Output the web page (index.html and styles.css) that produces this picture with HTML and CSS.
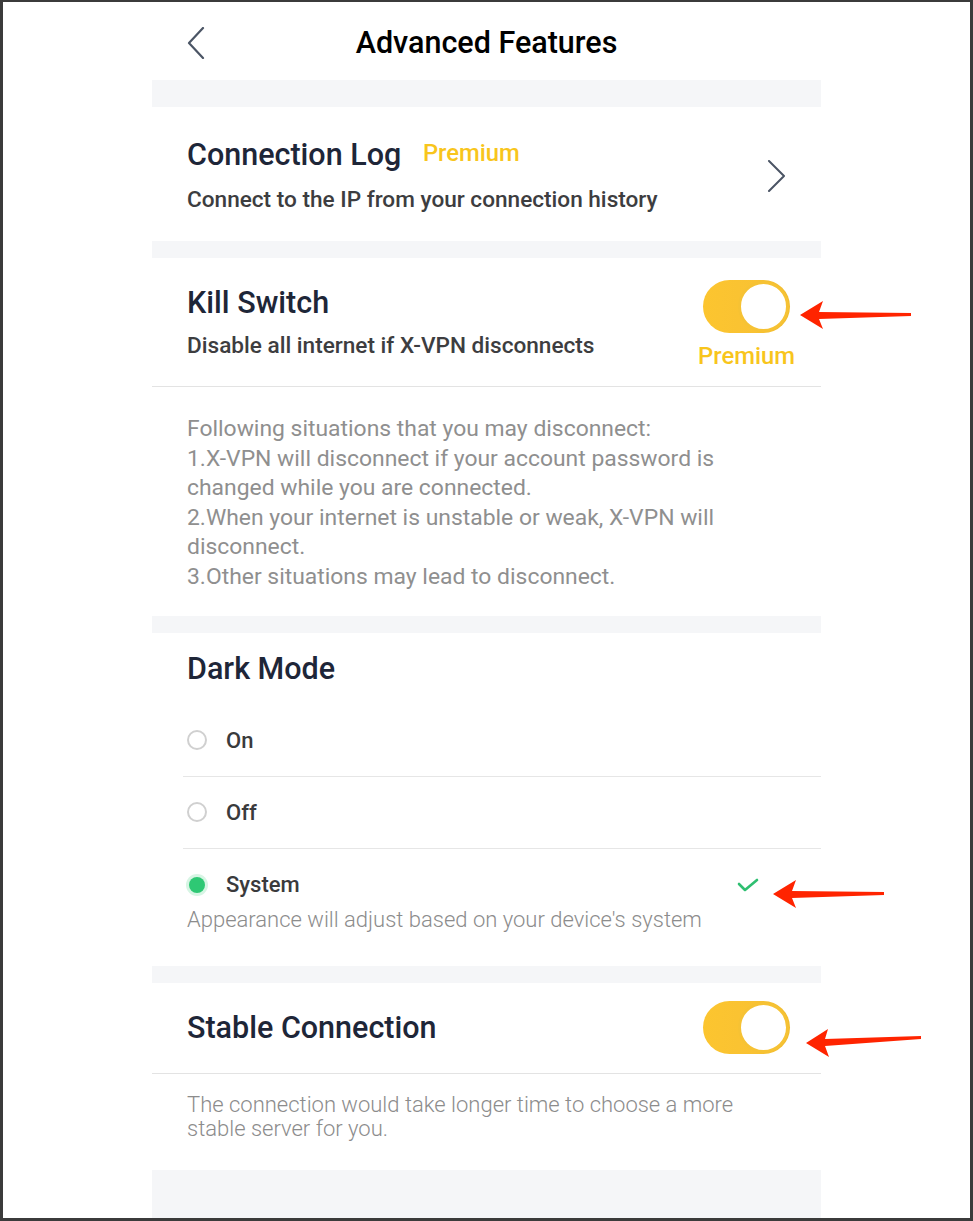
FILE: index.html
```html
<!DOCTYPE html>
<html lang="en">

<head>
  <meta charset="UTF-8" />
  <meta name="viewport" content="width=device-width, initial-scale=1.0" />
  <title>Advanced Features</title>
  <link rel="stylesheet" href="styles.css">
</head>

<body>
  <div class="frame">
    <div class="screen">
      <div class="header">
        <svg class="back" width="18" height="32" viewBox="0 0 18 32">
          <path d="M16 1 L2 16 L16 31" fill="none" stroke="#4b5565" stroke-width="2.2" stroke-linecap="round" stroke-linejoin="round" />
        </svg>
        <p class="header-title">Advanced Features</p>
      </div>

      <div class="band band-top"></div>

      <div class="section log">
        <div class="log-text">
          <p class="title">Connection Log <span class="premium">Premium</span></p>
          <p class="subtitle">Connect to the IP from your connection history</p>
        </div>
        <svg class="chevron" width="19" height="32" viewBox="0 0 19 32">
          <path d="M2 1 L17 16 L2 31" fill="none" stroke="#4b5565" stroke-width="2" stroke-linecap="round" stroke-linejoin="round" />
        </svg>
      </div>

      <div class="band"></div>

      <div class="section kill">
        <div class="kill-text">
          <p class="title">Kill Switch</p>
          <p class="subtitle">Disable all internet if X-VPN disconnects</p>
        </div>
        <div class="kill-side">
          <div class="toggle"><span class="knob"></span></div>
          <p class="premium premium-under">Premium</p>
        </div>
      </div>
      <div class="divider"></div>
      <div class="info">
        <p>Following situations that you may disconnect:</p>
        <p>1.X-VPN will disconnect if your account password is changed while you are connected.</p>
        <p>2.When your internet is unstable or weak, X-VPN will disconnect.</p>
        <p>3.Other situations may lead to disconnect.</p>
      </div>

      <div class="band"></div>

      <div class="section dark">
        <p class="title">Dark Mode</p>
        <div class="options">
          <div class="option">
            <span class="radio"></span>
            <span class="option-label">On</span>
          </div>
          <div class="option">
            <span class="radio"></span>
            <span class="option-label">Off</span>
          </div>
          <div class="option option-system">
            <div class="option-row">
              <span class="radio radio-on"></span>
              <span class="option-label">System</span>
              <svg class="check" width="22" height="14" viewBox="0 0 22 14">
                <path d="M2 6 L8 12 L20 2" fill="none" stroke="#2fbf71" stroke-width="2.6" stroke-linecap="round" stroke-linejoin="round" />
              </svg>
            </div>
            <p class="option-note">Appearance will adjust based on your device's system</p>
          </div>
        </div>
      </div>

      <div class="band"></div>

      <div class="section stable">
        <p class="title">Stable Connection</p>
        <div class="toggle"><span class="knob"></span></div>
      </div>
      <div class="divider"></div>
      <div class="stable-note">
        <p>The connection would take longer time to choose a more stable server for you.</p>
      </div>

      <div class="band band-bottom"></div>
    </div>

    <svg class="arrow arrow-kill" width="112" height="32" viewBox="0 0 112 32">
      <path d="M0 16 L23 2 L19 13 L111 14 L111 17 L19 20 L23 30 Z" fill="#ff2400" />
    </svg>
    <svg class="arrow arrow-check" width="112" height="32" viewBox="0 0 112 32">
      <path d="M0 16 L23 2 L19 13 L111 14 L111 17 L19 20 L23 30 Z" fill="#ff2400" />
    </svg>
    <svg class="arrow arrow-stable" width="116" height="34" viewBox="0 0 116 34">
      <path d="M0 19 L22 5 L19 15 L115 12 L115 15 L19 22 L23 33 Z" fill="#ff2400" />
    </svg>
  </div>
</body>

</html>
```

FILE: styles.css
```css
* {
  box-sizing: border-box;
}

body {
  margin: 0;
  background: #fff;
  font-family: Roboto, "Liberation Sans", sans-serif;
}

p {
  margin: 0;
}

.frame {
  position: relative;
  width: 973px;
  height: 1221px;
  border: 3px solid #3b3b3b;
  border-top-width: 2px;
  background: #fff;
  overflow: hidden;
}

.screen {
  margin-left: 149px;
  width: 669px;
  height: 100%;
  display: flex;
  flex-direction: column;
}

.header {
  position: relative;
  height: 78px;
  display: flex;
  align-items: center;
  justify-content: center;
}

.back {
  position: absolute;
  left: 35px;
  top: 25px;
}

.header-title {
  font-size: 30.5px;
  line-height: 36px;
  font-weight: 500;
  color: #000;
  margin-top: 4px;
}

.band {
  height: 17px;
  background: #f5f6f8;
  flex-shrink: 0;
}

.band-top {
  height: 27px;
}

.band-bottom {
  flex: 1;
}

.section {
  padding: 0 31px 0 35px;
}

.title {
  font-size: 30.5px;
  line-height: 34px;
  font-weight: 500;
  color: #1e2638;
}

.premium {
  font-size: 23.8px;
  font-weight: 500;
  color: #f8c51c;
  margin-left: 14px;
  vertical-align: 4px;
}

.subtitle {
  font-size: 22.6px;
  line-height: 24px;
  font-weight: 500;
  color: #3d3d40;
}

.log {
  height: 134px;
  display: flex;
  align-items: center;
  justify-content: space-between;
  padding-right: 35px;
}

.log .subtitle {
  margin-top: 16px;
}

.chevron {
  margin-top: 4px;
}

.kill {
  height: 128px;
  display: flex;
  justify-content: space-between;
}

.kill-text {
  padding-top: 28px;
}

.kill .subtitle {
  margin-top: 14px;
}

.kill-side {
  width: 87px;
  padding-top: 22px;
  display: flex;
  flex-direction: column;
  align-items: center;
}

.premium-under {
  margin: 11px 0 0 0;
  line-height: 24px;
  white-space: nowrap;
  vertical-align: baseline;
}

.toggle {
  width: 87px;
  height: 53px;
  border-radius: 27px;
  background: linear-gradient(90deg, #fcc52f 0%, #f9c233 60%, #efbb2e 100%);
  display: flex;
  justify-content: flex-end;
  align-items: center;
  flex-shrink: 0;
}

.knob {
  width: 51px;
  height: 51px;
  border-radius: 50%;
  background: #fff;
  border: 3px solid #f6c234;
  margin-right: 1px;
}

.divider {
  height: 1px;
  background: #e3e3e3;
  flex-shrink: 0;
}

.info {
  padding: 27px 35px 24px;
  font-size: 22.9px;
  line-height: 29.6px;
  color: #8f8f8f;
  width: 620px;
}

.dark {
  padding: 19px 0 0 0;
  height: 333px;
  flex-shrink: 0;
}

.dark .title {
  padding-left: 35px;
}

.options {
  margin: 19px 0 0 31px;
}

.option {
  height: 72px;
  display: flex;
  align-items: center;
  padding-left: 4px;
  border-bottom: 1px solid #e6e6e6;
}

.option-system {
  height: auto;
  display: block;
  border-bottom: none;
  padding-top: 24px;
}

.option-row {
  display: flex;
  align-items: center;
  height: 24px;
}

.radio {
  width: 20px;
  height: 20px;
  border-radius: 50%;
  border: 2.5px solid #d0d0d0;
  flex-shrink: 0;
}

.radio-on {
  border: none;
  background: #2ec874;
  box-shadow: 0 0 0 3px #d7f5e4;
  width: 16px;
  height: 16px;
  margin: 0 2px;
}

.option-label {
  font-size: 22px;
  font-weight: 500;
  color: #3a3a3c;
  margin-left: 19px;
}

.check {
  margin-left: auto;
  margin-right: 62px;
}

.option-note {
  margin-top: 11px;
  font-size: 22px;
  line-height: 24px;
  font-weight: 300;
  color: #8c8c8c;
}

.stable {
  height: 90px;
  display: flex;
  align-items: center;
  justify-content: space-between;
  flex-shrink: 0;
}

.stable-note {
  padding: 19px 35px 29px;
  font-size: 22px;
  line-height: 24px;
  font-weight: 300;
  color: #8c8c8c;
  width: 620px;
}

.arrow {
  position: absolute;
}

.arrow-kill {
  left: 797px;
  top: 297px;
}

.arrow-check {
  left: 770px;
  top: 876px;
}

.arrow-stable {
  left: 803px;
  top: 1022px;
}
```
